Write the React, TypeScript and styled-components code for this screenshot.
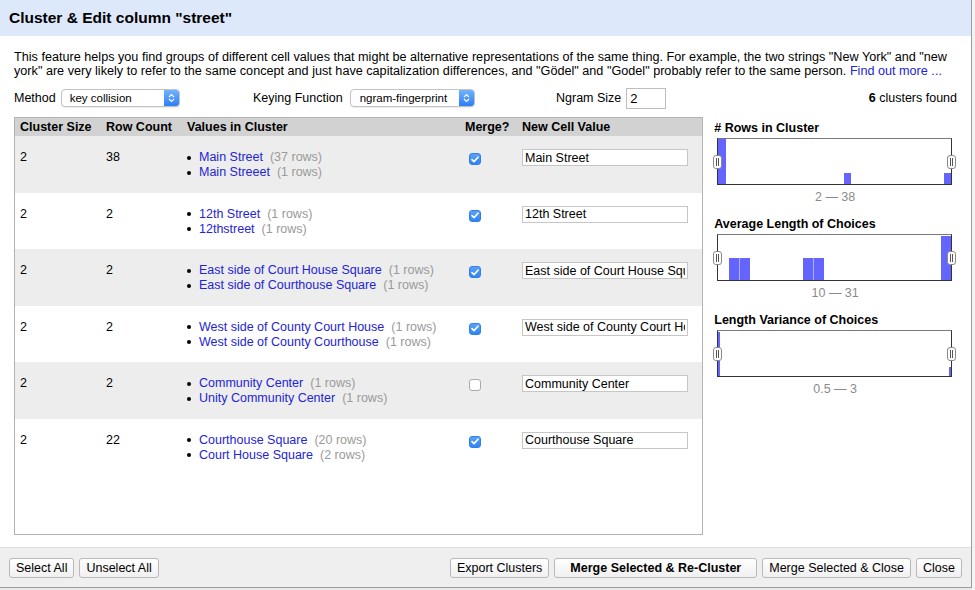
import React from "react";
import styled, { createGlobalStyle } from "styled-components";

const Global = createGlobalStyle`
  html, body { margin: 0; padding: 0; background: #e9e9e9; overflow: hidden; }
  body { font-family: "Liberation Sans", Arial, Helvetica, sans-serif; font-size: 12.5px; color: #000; }
  * { box-sizing: border-box; }
`;

const Page = styled.div`
  width: 975px;
  height: 590px;
  display: flex;
  align-items: flex-start;
`;

const Dialog = styled.div`
  width: 972px;
  height: 588px;
  background: #fff;
  border-right: 1px solid #9c9c9c;
  border-bottom: 1px solid #9c9c9c;
  display: flex;
  flex-direction: column;
`;

const TitleBar = styled.div`
  height: 36px;
  flex: none;
  background: #dee8fb;
  padding-left: 9px;
  display: flex;
  align-items: center;
  font-weight: bold;
  font-size: 15.5px;
`;

const Body = styled.div`
  flex: 1;
  padding: 14px 14px 0 14px;
  display: flex;
  flex-direction: column;
`;

const Intro = styled.p`
  margin: 0;
  line-height: 14px;
  font-size: 12.65px;
  white-space: nowrap;
`;

const Link = styled.a`
  color: #2424d6;
  text-decoration: none;
`;

const Controls = styled.div`
  display: flex;
  align-items: center;
  height: 22px;
  margin-top: 9px;
`;

const ControlGroup = styled.div<{ $w?: number; $gap: number }>`
  display: flex;
  align-items: center;
  gap: ${(p) => p.$gap}px;
  width: ${(p) => (p.$w ? `${p.$w}px` : "auto")};
`;

const SelectBox = styled.div<{ $w: number }>`
  width: ${(p) => p.$w}px;
  height: 18px;
  border: 1px solid #c2c2c2;
  border-radius: 4px;
  background: #fff;
  display: flex;
  align-items: center;
  overflow: hidden;
  font-size: 11.5px;
  box-shadow: 0 1px 1px rgba(0, 0, 0, 0.08);
`;

const SelectText = styled.span<{ $pad: number }>`
  padding-left: ${(p) => p.$pad}px;
  flex: 1;
`;

const Stepper = styled.span`
  width: 15px;
  align-self: stretch;
  background: linear-gradient(#72b3fc, #2b7ff5);
  display: flex;
  align-items: center;
  justify-content: center;
`;

const NgramInput = styled.input`
  width: 40px;
  height: 21px;
  border: 1px solid #bdbdbd;
  padding: 0 3px;
  font: 13px "Liberation Sans", Arial, sans-serif;
  outline: none;
`;

const Found = styled.div`
  margin-left: auto;
`;

const Main = styled.div`
  display: flex;
  margin-top: 8px;
`;

const TableBox = styled.div`
  width: 690px;
  height: 418px;
  border: 1px solid #b2b2b2;
  background: #fff;
`;

const cols = "86px 81px 278px 57px 1fr";

const HeaderRow = styled.div`
  display: grid;
  grid-template-columns: ${cols};
  height: 18px;
  background: #d2d2d2;
  align-items: center;
  font-weight: bold;
`;

const HeadCell = styled.div`
  padding-left: 5px;
  white-space: nowrap;
`;

const Row = styled.div<{ $alt: boolean }>`
  display: grid;
  grid-template-columns: ${cols};
  height: 56.5px;
  padding-top: 13px;
  background: ${(p) => (p.$alt ? "#ededed" : "#fff")};
  line-height: 15px;
`;

const Cell = styled.div`
  padding-left: 5px;
  white-space: nowrap;
`;

const TextCell = styled(Cell)`
  padding-top: 1px;
`;

const CheckCell = styled.div`
  padding: 4px 0 0 9px;
`;

const Values = styled.ul`
  margin: 0;
  padding: 0;
  list-style: none;
`;

const ValueItem = styled.li`
  display: flex;
  align-items: center;
  &::before {
    content: "";
    width: 4px;
    height: 4px;
    border-radius: 50%;
    background: #000;
    margin-right: 8px;
  }
`;

const ValueCount = styled.span`
  color: #9a9a9a;
  margin-left: 7px;
`;

const Box = styled.span<{ $on: boolean }>`
  display: flex;
  width: 12px;
  height: 12px;
  border-radius: 3px;
  align-items: center;
  justify-content: center;
  background: ${(p) => (p.$on ? "linear-gradient(#5aa2fb, #2f83f4)" : "#fff")};
  border: 1px solid ${(p) => (p.$on ? "#2f7fe8" : "#a9a9a9")};
`;

const ValueInput = styled.input`
  width: 166px;
  height: 17px;
  border: 1px solid #c6c6c6;
  padding: 0 2px;
  font: 12.5px "Liberation Sans", Arial, sans-serif;
  color: #000;
  outline: none;
  background: #fff;
`;

const Side = styled.div`
  margin-left: 10px;
  width: 244px;
  padding-top: 4px;
`;

const Section = styled.div`
  margin-bottom: 13px;
`;

const HistTitle = styled.div`
  font-weight: bold;
  line-height: 14px;
  padding-left: 1px;
`;

const HistFrame = styled.div`
  position: relative;
  margin: 3px 0 0 4px;
  width: 235px;
  height: 47px;
  border: 1px solid #333;
  border-top-color: #7a7a7a;
  background: #fff;
`;

const Handle = styled.span<{ $side: "left" | "right" }>`
  position: absolute;
  top: 50%;
  ${(p) => p.$side}: -5px;
  transform: translateY(-50%);
  width: 9px;
  height: 14px;
  border: 1px solid #8a8a8a;
  border-radius: 3px;
  background: #fff;
  display: flex;
  align-items: center;
  justify-content: center;
  gap: 1px;
  &::before,
  &::after {
    content: "";
    width: 1px;
    height: 8px;
    background: #555;
  }
`;

const Range = styled.div`
  text-align: center;
  color: #8a8a8a;
  margin-top: 5px;
  line-height: 14px;
`;

const Footer = styled.div`
  height: 40px;
  flex: none;
  background: #efefef;
  border-top: 1px solid #e0e0e0;
  display: flex;
  align-items: center;
  padding: 0 9px;
  gap: 5px;
`;

const Spacer = styled.div`
  flex: 1;
`;

const Button = styled.button<{ $primary?: boolean }>`
  height: 20px;
  padding: 0 ${(p) => (p.$primary ? 15 : 6)}px;
  font: ${(p) => (p.$primary ? "bold" : "normal")} 12.5px "Liberation Sans", Arial, sans-serif;
  color: #000;
  border: 1px solid #b9b9b9;
  border-radius: 3px;
  background: linear-gradient(#ffffff, #f0f0f0);
  white-space: nowrap;
`;

const Backdrop = styled.div`
  flex: 1;
  height: 590px;
  background: #f3f3f3;
`;

type Bar = { x: number; y: number; w: number; h: number };

const Histogram: React.FC<{ title: string; range: string; bars: Bar[] }> = ({ title, range, bars }) => (
  <Section>
    <HistTitle>{title}</HistTitle>
    <HistFrame>
      <svg width="233" height="45" viewBox="0 0 233 45">
        {bars.map((b, i) => (
          <rect key={i} x={b.x} y={b.y} width={b.w} height={b.h} fill="#6464ff" />
        ))}
      </svg>
      <Handle $side="left" />
      <Handle $side="right" />
    </HistFrame>
    <Range>{range}</Range>
  </Section>
);

const Chevrons = () => (
  <svg width="7" height="10" viewBox="0 0 7 10">
    <path d="M1 4 L3.5 1.5 L6 4 M1 6 L3.5 8.5 L6 6" fill="none" stroke="#fff" strokeWidth="1.2" />
  </svg>
);

const Check = () => (
  <svg width="8" height="7" viewBox="0 0 8 7">
    <path d="M1 3.6 L3 5.6 L7 1.2" fill="none" stroke="#fff" strokeWidth="1.6" strokeLinecap="round" strokeLinejoin="round" />
  </svg>
);

type Cluster = {
  size: number;
  count: number;
  values: [string, number][];
  merge: boolean;
  value: string;
};

const clusters: Cluster[] = [
  { size: 2, count: 38, values: [["Main Street", 37], ["Main Streeet", 1]], merge: true, value: "Main Street" },
  { size: 2, count: 2, values: [["12th Street", 1], ["12thstreet", 1]], merge: true, value: "12th Street" },
  {
    size: 2,
    count: 2,
    values: [["East side of Court House Square", 1], ["East side of Courthouse Square", 1]],
    merge: true,
    value: "East side of Court House Square",
  },
  {
    size: 2,
    count: 2,
    values: [["West side of County Court House", 1], ["West side of County Courthouse", 1]],
    merge: true,
    value: "West side of County Court House",
  },
  {
    size: 2,
    count: 2,
    values: [["Community Center", 1], ["Unity Community Center", 1]],
    merge: false,
    value: "Community Center",
  },
  {
    size: 2,
    count: 22,
    values: [["Courthouse Square", 20], ["Court House Square", 2]],
    merge: true,
    value: "Courthouse Square",
  },
];

export default function App() {
  return (
    <>
      <Global />
      <Page>
        <Dialog>
          <TitleBar>Cluster &amp; Edit column "street"</TitleBar>
          <Body>
            <Intro>
              This feature helps you find groups of different cell values that might be alternative representations of
              the same thing. For example, the two strings "New York" and "new
              <br />
              york" are very likely to refer to the same concept and just have capitalization differences, and "Gödel"
              and "Godel" probably refer to the same person. <Link href="#">Find out more ...</Link>
            </Intro>
            <Controls>
              <ControlGroup $w={239} $gap={5}>
                <span>Method</span>
                <SelectBox $w={119}>
                  <SelectText $pad={8}>key collision</SelectText>
                  <Stepper>
                    <Chevrons />
                  </Stepper>
                </SelectBox>
              </ControlGroup>
              <ControlGroup $w={303} $gap={7}>
                <span>Keying Function</span>
                <SelectBox $w={125}>
                  <SelectText $pad={9}>ngram-fingerprint</SelectText>
                  <Stepper>
                    <Chevrons />
                  </Stepper>
                </SelectBox>
              </ControlGroup>
              <ControlGroup $gap={5}>
                <span>Ngram Size</span>
                <NgramInput defaultValue="2" />
              </ControlGroup>
              <Found>
                <b>6</b> clusters found
              </Found>
            </Controls>
            <Main>
              <TableBox>
                <HeaderRow>
                  <HeadCell>Cluster Size</HeadCell>
                  <HeadCell>Row Count</HeadCell>
                  <HeadCell>Values in Cluster</HeadCell>
                  <HeadCell>Merge?</HeadCell>
                  <HeadCell>New Cell Value</HeadCell>
                </HeaderRow>
                {clusters.map((c, i) => (
                  <Row key={i} $alt={i % 2 === 0}>
                    <TextCell>{c.size}</TextCell>
                    <TextCell>{c.count}</TextCell>
                    <TextCell>
                      <Values>
                        {c.values.map(([v, n]) => (
                          <ValueItem key={v}>
                            <Link href="#">{v}</Link>
                            <ValueCount>({n} rows)</ValueCount>
                          </ValueItem>
                        ))}
                      </Values>
                    </TextCell>
                    <CheckCell>
                      <Box $on={c.merge}>{c.merge && <Check />}</Box>
                    </CheckCell>
                    <Cell>
                      <ValueInput defaultValue={c.value} readOnly />
                    </Cell>
                  </Row>
                ))}
              </TableBox>
              <Side>
                <Histogram
                  title="# Rows in Cluster"
                  range="2 — 38"
                  bars={[
                    { x: 0, y: 0, w: 8, h: 45 },
                    { x: 126, y: 34, w: 7, h: 11 },
                    { x: 226, y: 34, w: 7, h: 11 },
                  ]}
                />
                <Histogram
                  title="Average Length of Choices"
                  range="10 — 31"
                  bars={[
                    { x: 11, y: 23, w: 10.3, h: 22 },
                    { x: 21.7, y: 23, w: 10.3, h: 22 },
                    { x: 85, y: 23, w: 10.3, h: 22 },
                    { x: 95.7, y: 23, w: 10.3, h: 22 },
                    { x: 223, y: 1, w: 10, h: 44 },
                  ]}
                />
                <Histogram
                  title="Length Variance of Choices"
                  range="0.5 — 3"
                  bars={[
                    { x: 0, y: 1, w: 2, h: 44 },
                    { x: 231, y: 36, w: 2, h: 9 },
                  ]}
                />
              </Side>
            </Main>
          </Body>
          <Footer>
            <Button>Select All</Button>
            <Button>Unselect All</Button>
            <Spacer />
            <Button>Export Clusters</Button>
            <Button $primary>Merge Selected &amp; Re-Cluster</Button>
            <Button>Merge Selected &amp; Close</Button>
            <Button>Close</Button>
          </Footer>
        </Dialog>
        <Backdrop />
      </Page>
    </>
  );
}
